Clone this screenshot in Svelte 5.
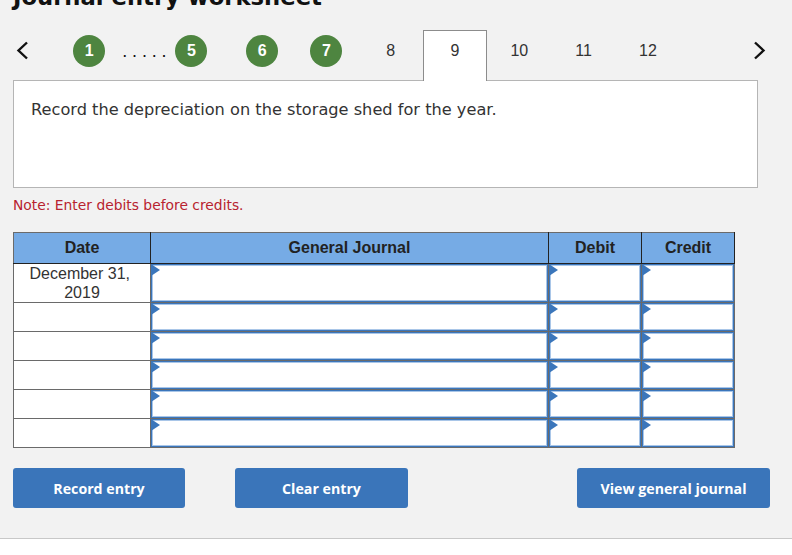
<script>
	const rows = [
		{ date: 'December 31,\u00a0 2019', tall: true },
		{ date: '' },
		{ date: '' },
		{ date: '' },
		{ date: '' },
		{ date: '' }
	];

	const steps = [
		{ n: 1, done: true },
		{ dots: true },
		{ n: 5, done: true },
		{ gap: true },
		{ n: 6, done: true },
		{ n: 7, done: true },
		{ n: 8 },
		{ n: 9, active: true },
		{ n: 10 },
		{ n: 11 },
		{ n: 12 }
	];
</script>

<div class="page">
	<h1 class="title">Journal entry worksheet</h1>

	<nav class="steps">
		<button class="arrow" aria-label="Previous">
			<svg width="13" height="19" viewBox="0 0 13 19"><path d="M11 1.5 2.5 9.5 11 17.5" fill="none" stroke="#111" stroke-width="2.4" /></svg>
		</button>
		{#each steps as step}
			{#if step.dots}
				<span class="dots">.....</span>
			{:else if step.gap}
				<span class="gap"></span>
			{:else}
				<div class="step" class:active={step.active}>
					<span class:circle={step.done}>{step.n}</span>
				</div>
			{/if}
		{/each}
		<button class="arrow next" aria-label="Next">
			<svg width="13" height="19" viewBox="0 0 13 19"><path d="M2 1.5 10.5 9.5 2 17.5" fill="none" stroke="#111" stroke-width="2.4" /></svg>
		</button>
	</nav>

	<div class="prompt">Record the depreciation on the storage shed for the year.</div>
	<p class="note">Note: Enter debits before credits.</p>

	<table class="journal">
		<colgroup>
			<col class="c-date" />
			<col class="c-acct" />
			<col class="c-amt" />
			<col class="c-amt" />
		</colgroup>
		<thead>
			<tr>
				<th>Date</th>
				<th>General Journal</th>
				<th>Debit</th>
				<th>Credit</th>
			</tr>
		</thead>
		<tbody>
			{#each rows as row}
				<tr class:tall={row.tall}>
					<td class="date">{row.date}</td>
					<td class="entry"></td>
					<td class="entry"></td>
					<td class="entry"></td>
				</tr>
			{/each}
		</tbody>
	</table>

	<div class="actions">
		<button class="btn record">Record entry</button>
		<button class="btn clear">Clear entry</button>
		<button class="btn view">View general journal</button>
	</div>
</div>

<style>
	:global(body) {
		background: #fff;
		font-family: "Liberation Sans", Arial, sans-serif;
	}

	.page {
		height: 539px;
		box-sizing: border-box;
		background: #f2f2f2;
		border-bottom: 1px solid #c8c8c8;
		padding: 0 13px;
		overflow: hidden;
	}

	.title {
		margin: -18px 0 0;
		height: 30px;
		line-height: 30px;
		font-family: "DejaVu Sans", Verdana, sans-serif;
		font-size: 22.7px;
		font-weight: 700;
		color: #111;
	}

	.steps {
		display: flex;
		align-items: stretch;
		height: 51px;
		margin-top: 18px;
		position: relative;
		z-index: 1;
	}

	.arrow {
		width: 44px;
		padding: 0 0 10px 3px;
		border: none;
		background: none;
		display: flex;
		align-items: center;
		justify-content: flex-start;
	}

	.next {
		margin-left: 70px;
		width: 20px;
	}

	.step {
		width: 64.3px;
		box-sizing: border-box;
		display: flex;
		align-items: center;
		justify-content: center;
		font-size: 16px;
		color: #333;
		padding-bottom: 10px;
	}

	.step.active {
		background: #fff;
		border: 1px solid #8c8c8c;
		border-bottom: none;
	}

	.circle {
		width: 32px;
		height: 32px;
		border-radius: 50%;
		background: #4e8540;
		color: #fff;
		font-weight: 700;
		display: flex;
		align-items: center;
		justify-content: center;
	}

	.dots {
		width: 38px;
		padding-left: 1px;
		box-sizing: border-box;
		font-size: 18px;
		letter-spacing: 4.8px;
		color: #111;
		line-height: 42px;
		white-space: nowrap;
	}

	.gap {
		width: 6.4px;
	}

	.prompt {
		width: 745px;
		height: 108px;
		box-sizing: border-box;
		margin-top: -1px;
		padding: 18px 17px;
		background: #fff;
		border: 1px solid #b5b5b5;
		font-family: "DejaVu Sans", Verdana, sans-serif;
		font-size: 16.2px;
		line-height: 22px;
		color: #333;
	}

	.note {
		margin: 8px 0 0;
		height: 18px;
		line-height: 18px;
		font-family: "DejaVu Sans", Verdana, sans-serif;
		font-size: 13.85px;
		color: #b8232f;
	}

	.journal {
		margin-top: 18px;
		width: 721px;
		table-layout: fixed;
		border-collapse: collapse;
		background: #fff;
	}

	.c-date {
		width: 137px;
	}

	.c-acct {
		width: 398px;
	}

	.c-amt {
		width: 93px;
	}

	th {
		height: 30px;
		padding: 0;
		background: #76abe5;
		border: 1px solid #222;
		border-top-color: #6b6b6b;
		border-left-color: #6b6b6b;
		font-size: 16px;
		font-weight: 700;
		color: #222;
	}

	th + th {
		border-left-color: #222;
	}

	td {
		height: 28px;
		padding: 0;
		border: 1px solid #6a6a6a;
	}

	.tall td {
		height: 38px;
	}

	.date {
		font-size: 16px;
		line-height: 19px;
		color: #333;
		text-align: center;
		vertical-align: middle;
		padding: 0 8px;
	}

	.entry {
		position: relative;
		box-shadow: inset 0 0 0 1px #3b76bb, inset 0 0 0 2px #a9c6e8;
	}

	.entry::before {
		content: "";
		position: absolute;
		top: 0;
		left: 0;
		border-left: 9px solid #3b76bb;
		border-top: 6px solid transparent;
		border-bottom: 6px solid transparent;
	}

	.actions {
		display: flex;
		margin-top: 20px;
	}

	.btn {
		height: 40px;
		padding: 0;
		border: none;
		border-radius: 3px;
		background: #3a75ba;
		color: #fff;
		font-family: "Open Sans", sans-serif;
		font-size: 14.2px;
		font-weight: 700;
	}

	.record {
		width: 172px;
	}

	.clear {
		width: 173px;
		margin-left: 50px;
	}

	.view {
		width: 193px;
		margin-left: 169px;
	}
</style>
